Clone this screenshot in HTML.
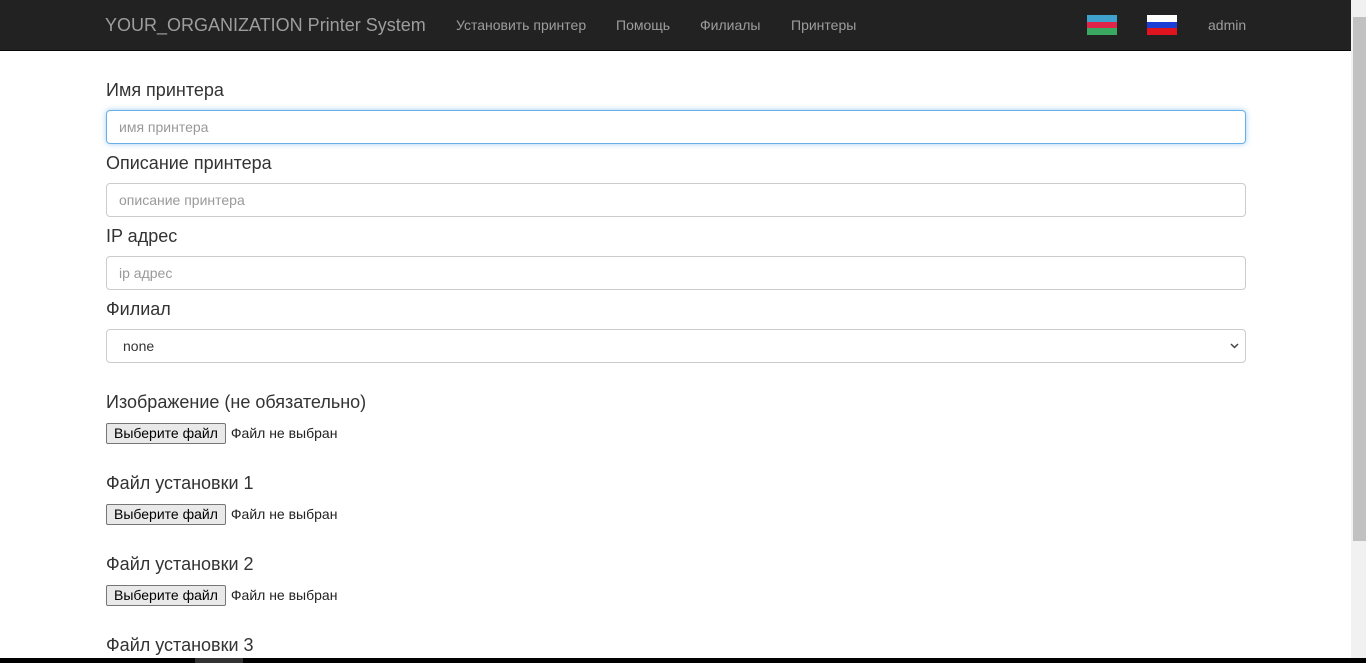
<!DOCTYPE html>
<html><head><meta charset="utf-8"><style>
*{box-sizing:border-box}
body{margin:0;width:1366px;height:663px;overflow:hidden;background:#fff;font-family:"Liberation Sans",Arial,sans-serif;color:#333;position:relative}
.nav{position:absolute;left:0;top:0;width:1351px;height:51px;background:#222;border-bottom:1px solid #080808}
.nav span{position:absolute;top:0;line-height:50px;color:#9d9d9d;font-size:14px}
.brand{font-size:18px!important}
.lbl{position:absolute;left:106px;font-size:18px;color:#333}
.inp{position:absolute;left:106px;width:1140px;height:34px;border:1px solid #ccc;border-radius:4px;font-size:14px;color:#999;padding:0 12px;line-height:32px}
.file{position:absolute;left:106px;font-size:14px;color:#222}
.btn{display:inline-block;background:#e9e9e9;border:1px solid #767676;border-radius:2px;padding:0 7px;height:21px;line-height:19px;margin-right:5px;color:#000}
.sb{position:absolute;left:1351px;top:0;width:15px;height:658px;background:#f1f1f1}
.th{position:absolute;left:1353px;top:17px;width:13px;height:524px;background:#c1c1c1}
.bot{position:absolute;left:0;top:658px;width:1366px;height:5px;background:#000}
</style></head><body>
<div class="nav">
<span class="brand" style="left:105px">YOUR_ORGANIZATION Printer System</span>
<span style="left:456px">Установить принтер</span>
<span style="left:616px">Помощь</span>
<span style="left:700px">Филиалы</span>
<span style="left:791px">Принтеры</span>
<span style="left:1208px">admin</span>
<div style="position:absolute;left:1087px;top:15px;width:30px;height:20px"><div style="height:7px;background:#3fa2cc"></div><div style="height:6px;background:#e0244a"></div><div style="height:7px;background:#3aa860"></div></div>
<div style="position:absolute;left:1147px;top:15px;width:30px;height:20px"><div style="height:7px;background:#fff"></div><div style="height:6px;background:#1b3fd6"></div><div style="height:7px;background:#e0141e"></div></div>
</div>
<div class="lbl" style="top:80px">Имя принтера</div>
<div class="inp" style="top:110px;border-color:#66afe9;box-shadow:0 0 6px rgba(102,175,233,.6)">имя принтера</div>
<div class="lbl" style="top:153px">Описание принтера</div>
<div class="inp" style="top:183px">описание принтера</div>
<div class="lbl" style="top:226px">IP адрес</div>
<div class="inp" style="top:256px">ip адрес</div>
<div class="lbl" style="top:299px">Филиал</div>
<div class="inp" style="top:329px;color:#333;padding-left:16px">none<svg style="position:absolute;right:6px;top:13px" width="9" height="6" viewBox="0 0 9 6"><path d="M1 1l3.5 3.5L8 1" fill="none" stroke="#444" stroke-width="1.5"/></svg></div>
<div class="lbl" style="top:392px">Изображение (не обязательно)</div>
<div class="file" style="top:423px"><span class="btn">Выберите файл</span>Файл не выбран</div>
<div class="lbl" style="top:473px">Файл установки 1</div>
<div class="file" style="top:504px"><span class="btn">Выберите файл</span>Файл не выбран</div>
<div class="lbl" style="top:554px">Файл установки 2</div>
<div class="file" style="top:585px"><span class="btn">Выберите файл</span>Файл не выбран</div>
<div class="lbl" style="top:635px">Файл установки 3</div>
<div class="sb"></div><div class="th"></div>
<div class="bot"><div style="position:absolute;left:195px;width:48px;height:5px;background:#333"></div></div>
</body></html>
